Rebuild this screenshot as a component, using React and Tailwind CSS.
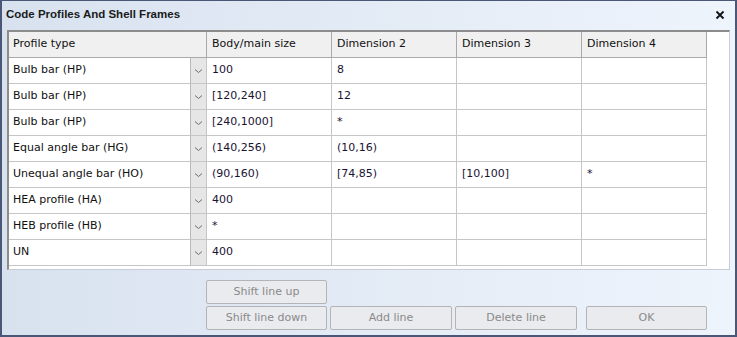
import React from 'react';

const rows = [
  ['Bulb bar (HP)', '100', '8', '', ''],
  ['Bulb bar (HP)', '[120,240]', '12', '', ''],
  ['Bulb bar (HP)', '[240,1000]', '*', '', ''],
  ['Equal angle bar (HG)', '(140,256)', '(10,16)', '', ''],
  ['Unequal angle bar (HO)', '(90,160)', '[74,85)', '[10,100]', '*'],
  ['HEA profile (HA)', '400', '', '', ''],
  ['HEB profile (HB)', '*', '', '', ''],
  ['UN', '400', '', '', ''],
];

const headers = ['Body/main size', 'Dimension 2', 'Dimension 3', 'Dimension 4'];

const Chevron = () => (
  <svg width="9" height="6" viewBox="0 0 9 6" fill="none">
    <path d="M1 1.5 L4.5 4.5 L8 1.5" stroke="#6b6b6b" strokeWidth="1" />
  </svg>
);

const Button = ({ children, className = '' }) => (
  <button
    className={`h-[24px] rounded-[2px] border border-[#b4b4b4] bg-[#e9ebee] text-[#8a8a8a] text-[11px] ${className}`}
  >
    {children}
  </button>
);

export default function App() {
  return (
    <div
      className="w-[737px] h-[337px] flex flex-col border-x-2 border-b-2 border-t border-[#4b5777] bg-gradient-to-r from-[#d8e2ef] to-[#eef4fc] overflow-hidden"
      style={{ fontFamily: '"DejaVu Sans", Verdana, sans-serif' }}
    >
      {/* title */}
      <div className="h-[28px] flex items-center justify-between pl-[4px] pr-[10px] shrink-0">
        <span
          className="font-bold text-[11.5px] text-[#1b1b1b]"
          style={{ fontFamily: '"Liberation Sans", Arial, sans-serif' }}
        >
          Code Profiles And Shell Frames
        </span>
        <svg width="10" height="10" viewBox="0 0 10 10">
          <path d="M1.5 1.5 L8.5 8.5 M8.5 1.5 L1.5 8.5" stroke="#111" strokeWidth="1.8" />
        </svg>
      </div>

      {/* grid */}
      <div className="ml-[5px] mt-[1px] w-[723px] h-[240px] bg-white border-t-2 border-l-2 border-[#8c8c8c] border-r border-b border-r-[#c7cdd6] border-b-[#c7cdd6] shrink-0 overflow-hidden">
        <div className="flex h-[26px] w-[698px] bg-[#f0f0f0] border-b border-[#a9a9a9]">
          <div className="w-[198px] border-r border-[#a9a9a9] pl-[4px] flex items-center text-[11px] text-[#111]">
            Profile type
          </div>
          {headers.map((h) => (
            <div key={h} className="w-[125px] border-r border-[#a9a9a9] pl-[5px] flex items-center text-[11px] text-[#111]">
              {h}
            </div>
          ))}
        </div>
        {rows.map((r, i) => (
          <div key={i} className="flex h-[26px] w-[698px] border-b border-[#c6c6c6]">
            <div className="w-[198px] border-r border-[#c6c6c6] flex items-stretch">
              <div className="flex-1 pl-[4px] flex items-center text-[11px] text-[#111]">{r[0]}</div>
              <div className="w-[16px] bg-[#e6e6e6] border-l border-[#b9b9b9] flex items-center justify-center">
                <Chevron />
              </div>
            </div>
            {r.slice(1).map((c, j) => (
              <div key={j} className="w-[125px] border-r border-[#c6c6c6] pl-[5px] flex items-center text-[11px] text-[#1a1333]">
                {c}
              </div>
            ))}
          </div>
        ))}
      </div>

      {/* buttons */}
      <div className="flex flex-col gap-[2px] mt-[10px] pl-[204px]">
        <div className="flex">
          <Button className="w-[121px]">Shift line up</Button>
        </div>
        <div className="flex">
          <Button className="w-[121px]">Shift line down</Button>
          <Button className="w-[122px] ml-[3px]">Add line</Button>
          <Button className="w-[122px] ml-[3px]">Delete line</Button>
          <Button className="w-[121px] ml-[9px]">OK</Button>
        </div>
      </div>
    </div>
  );
}
